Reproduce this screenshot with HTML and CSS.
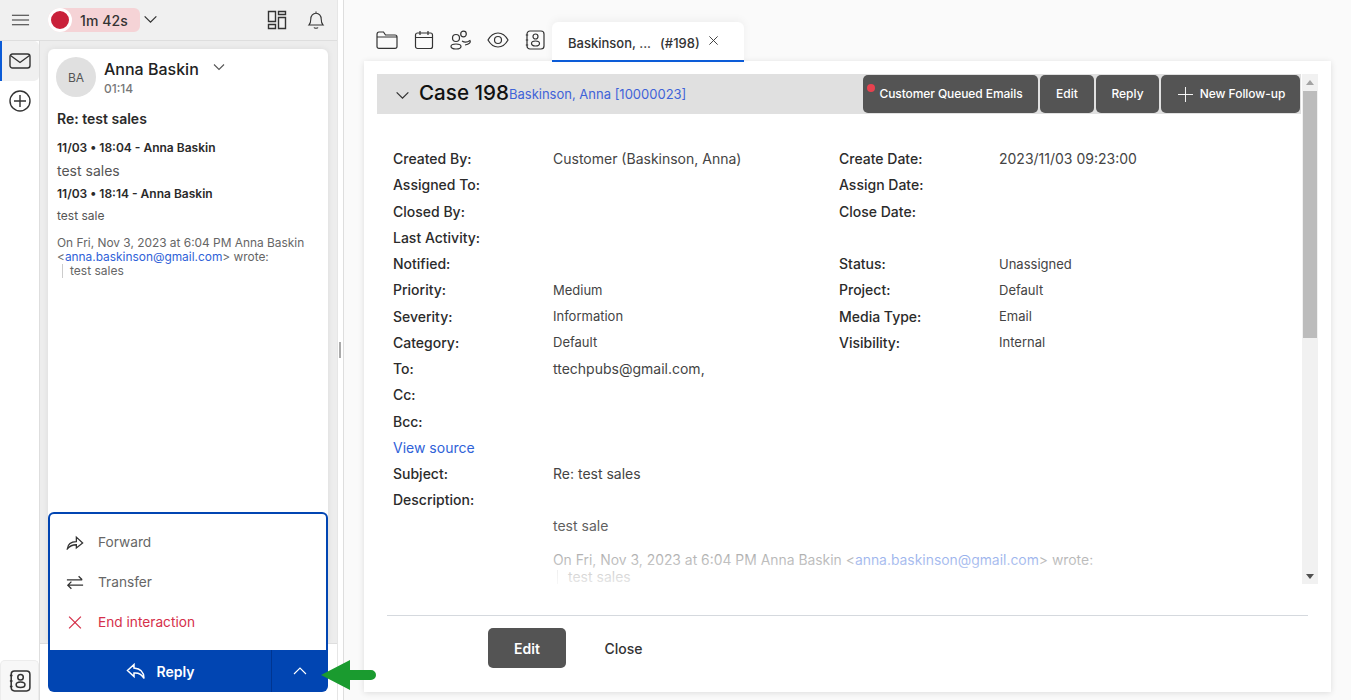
FILE: index.html

```html
<!DOCTYPE html>
<html lang="en">
<head>
  <meta charset="UTF-8">
  <meta name="viewport" content="width=device-width, initial-scale=1.0">
  <title>Case 198</title>
  <link rel="stylesheet" href="styles.css">
</head>
<body>
  <div class="app">
    <aside class="left">
      <div class="topbar">
        <svg class="ico menu-ico" viewBox="0 0 20 14"><path d="M1 2h18M1 7h18M1 12h18"/></svg>
        <div class="timer"><span class="rec"></span><span>1m 42s</span></div>
        <svg class="ico timer-caret" viewBox="0 0 16 10"><path d="M1.500 1.500 8 8l6.500-6.500"/></svg>
        <svg class="ico layout-ico" viewBox="0 0 20 20"><path d="M1.500 1.500h7v10h-7zM11.500 1.500h7v3h-7zM11.500 7.500h7v11h-7zM1.500 14.500h7v4h-7z"/></svg>
        <svg class="ico bell-ico" viewBox="0 0 20 20"><path d="M3 15c1.500-1.500 1.800-3 1.800-6 0-3.200 2.200-5.800 5.200-5.800s5.200 2.600 5.200 5.800c0 3 .3 4.500 1.800 6zM8 17.500c.5 1 3.500 1 4 0M10 3V1.500"/></svg>
      </div>
      <div class="left-body">
        <nav class="rail">
          <div class="rail-item active">
            <svg class="ico" viewBox="0 0 22 16"><rect x="1" y="1" width="20" height="14" rx="2.500"/><path d="m1.500 2.500 9.500 7 9.500-7"/></svg>
          </div>
          <div class="rail-item">
            <svg class="ico" viewBox="0 0 22 22"><circle cx="11" cy="11" r="10"/><path d="M11 5v12M5 11h12"/></svg>
          </div>
          <div class="rail-item contacts">
            <svg class="ico" viewBox="0 0 20 20"><rect x="2" y="1" width="17" height="18" rx="3"/><circle cx="10.500" cy="6.500" r="2.500"/><ellipse cx="10.500" cy="13.500" rx="4" ry="2.500"/><path d="M.8 5h2.400M.8 10h2.400M.8 15h2.400"/></svg>
          </div>
        </nav>
        <div class="inbox">
          <div class="inbox-fill">
            <div class="msg-card">
              <div class="msg-head">
                <div class="avatar">BA</div>
                <div class="who">
                  <div class="who-name">Anna Baskin <svg class="ico who-caret" viewBox="0 0 12 8"><path d="M1 1.500 6 6.500l5-5"/></svg></div>
                  <div class="who-time">01:14</div>
                </div>
              </div>
              <div class="msg-subject">Re: test sales</div>
              <div class="msg-meta first">11/03 • 18:04 - Anna Baskin</div>
              <div class="msg-text">test sales</div>
              <div class="msg-meta second">11/03 • 18:14 - Anna Baskin</div>
              <div class="msg-small">test sale</div>
              <div class="msg-quote">On Fri, Nov 3, 2023 at 6:04 PM Anna Baskin<br>&lt;<a href="#">anna.baskinson@gmail.com</a>&gt; wrote:</div>
              <div class="msg-quoted">test sales</div>
            </div>
          </div>
          <div class="inbox-foot"></div>
          <div class="reply-box">
            <div class="reply-menu">
              <div class="reply-opt">
                <svg class="ico" viewBox="0 0 20 16"><path d="M1.500 15c.5-5 4-8 10-8V2l7 6.500-7 5.500v-3.500c-4 0-7 .8-10 4.500z"/></svg>
                <span>Forward</span>
              </div>
              <div class="reply-opt">
                <svg class="ico" viewBox="0 0 20 16"><path d="M1 5h17M14 1l4 4M19 11H2M6 7l-4 4 4 4"/></svg>
                <span>Transfer</span>
              </div>
              <div class="reply-opt end">
                <svg class="ico" viewBox="0 0 14 14"><path d="m1.500 1.500 11 11M12.500 1.500l-11 11"/></svg>
                <span>End interaction</span>
              </div>
            </div>
            <div class="reply-bar">
              <div class="reply-main">
                <svg class="ico" viewBox="0 0 20 16"><path d="M8 1 1.500 7 8 13V9.500c4-.3 7.500.5 10 5.500 0-6-3.500-10-10-10.500z"/></svg>
                <span>Reply</span>
              </div>
              <div class="reply-more">
                <svg class="ico" viewBox="0 0 14 8"><path d="M1 7 7 1l6 6"/></svg>
              </div>
            </div>
          </div>
        </div>
      </div>
    </aside>

    <div class="splitter"><span class="grip"></span></div>

    <main class="right">
      <div class="tabs">
        <svg class="ico tab-ico" viewBox="0 0 22 18"><path d="M1 3.500C1 2 1.800 1 3 1h4.500l2 3H19c1.200 0 2 .8 2 2v9.500c0 1-.8 1.800-2 1.800H3c-1.200 0-2-.8-2-1.800zM1 6h20"/></svg>
        <svg class="ico tab-ico" viewBox="0 0 20 20"><rect x="1.500" y="3" width="17" height="15.500" rx="2"/><path d="M1.500 7.500h17M6 1v4M14 1v4"/></svg>
        <svg class="ico tab-ico" viewBox="0 0 22 20"><circle cx="13.500" cy="4" r="2.800"/><circle cx="6" cy="8" r="3.500"/><ellipse cx="6" cy="16.500" rx="5" ry="2.500"/><path d="M12 11c3 2 6 1 8-.5 1 1.500-.5 4-5 4.500"/></svg>
        <svg class="ico tab-ico" viewBox="0 0 22 16"><path d="M1 8c2.500-4.500 6-7 10-7s7.500 2.500 10 7c-2.500 4.500-6 7-10 7S3.500 12.500 1 8z"/><circle cx="11" cy="8" r="3.500"/></svg>
        <svg class="ico tab-ico last" viewBox="0 0 20 20"><rect x="2" y="1" width="17" height="18" rx="3"/><circle cx="10.500" cy="6.500" r="2.500"/><ellipse cx="10.500" cy="13.500" rx="4" ry="2.500"/><path d="M.8 5h2.400M.8 10h2.400M.8 15h2.400"/></svg>
        <div class="tab">
          <span class="tab-title">Baskinson, ...</span>
          <span class="tab-id">(#198)</span>
          <svg class="ico tab-x" viewBox="0 0 12 12"><path d="m1.500 1.500 9 9M10.500 1.500l-9 9"/></svg>
        </div>
      </div>
      <section class="case-card">
        <div class="case-view">
          <div class="case-main">
            <header class="case-head">
              <svg class="ico head-caret" viewBox="0 0 16 10"><path d="M1.500 1.500 8 8l6.500-6.500"/></svg>
              <h1 class="case-title">Case 198</h1>
              <a class="case-link" href="#">Baskinson, Anna [10000023]</a>
              <div class="head-btns">
                <button class="btn queued">Customer Queued Emails<span class="dot"></span></button>
                <button class="btn edit">Edit</button>
                <button class="btn reply">Reply</button>
                <button class="btn follow">
                  <svg class="ico" viewBox="0 0 16 16"><path d="M8 0v16M0 8h16"/></svg>New Follow-up
                </button>
              </div>
            </header>
            <div class="fields">
              <div class="lbl">Created By:</div><div class="val big">Customer (Baskinson, Anna)</div><div class="lbl">Create Date:</div><div class="val big">2023/11/03 09:23:00</div>
              <div class="lbl">Assigned To:</div><div class="val"></div><div class="lbl">Assign Date:</div><div class="val"></div>
              <div class="lbl">Closed By:</div><div class="val"></div><div class="lbl">Close Date:</div><div class="val"></div>
              <div class="lbl">Last Activity:</div><div class="val"></div><div class="lbl"></div><div class="val"></div>
              <div class="lbl">Notified:</div><div class="val"></div><div class="lbl">Status:</div><div class="val">Unassigned</div>
              <div class="lbl">Priority:</div><div class="val">Medium</div><div class="lbl">Project:</div><div class="val">Default</div>
              <div class="lbl">Severity:</div><div class="val">Information</div><div class="lbl">Media Type:</div><div class="val">Email</div>
              <div class="lbl">Category:</div><div class="val">Default</div><div class="lbl">Visibility:</div><div class="val">Internal</div>
              <div class="lbl">To:</div><div class="val big">ttechpubs@gmail.com,</div><div class="lbl"></div><div class="val"></div>
              <div class="lbl">Cc:</div><div class="val"></div><div class="lbl"></div><div class="val"></div>
              <div class="lbl">Bcc:</div><div class="val"></div><div class="lbl"></div><div class="val"></div>
              <div class="source"><a href="#">View source</a></div>
              <div class="lbl">Subject:</div><div class="val big">Re: test sales</div><div class="lbl"></div><div class="val"></div>
              <div class="lbl">Description:</div><div class="val"></div><div class="lbl"></div><div class="val"></div>
            </div>
            <div class="desc">
              <div class="desc-line">test sale</div>
              <div class="desc-quote">On Fri, Nov 3, 2023 at 6:04 PM Anna Baskin &lt;<a href="#">anna.baskinson@gmail.com</a>&gt; wrote:</div>
              <div class="desc-quoted">test sales</div>
            </div>
          </div>
          <div class="scrollbar">
            <span class="sb-up"></span>
            <span class="sb-thumb"></span>
            <span class="sb-down"></span>
          </div>
        </div>
        <footer class="case-foot">
          <button class="foot-edit">Edit</button>
          <button class="foot-close">Close</button>
        </footer>
      </section>
    </main>
  </div>

  <svg class="arrow" viewBox="0 0 56 30"><path d="M1 15 30 0v10h21a5 5 0 0 1 0 10H30v10z"/></svg>
</body>
</html>
```

FILE: styles.css

```css
* {
  box-sizing: border-box;
}

html, body {
  margin: 0;
  height: 700px;
  overflow: hidden;
}

body {
  font-family: Inter, "Liberation Sans", sans-serif;
  color: #2b2b2b;
  background: #fafafa;
  position: relative;
}

a {
  color: #2f62d8;
  text-decoration: none;
}

.ico {
  fill: none;
  stroke: #333;
  stroke-width: 1.4;
  display: block;
  flex: none;
}

.app {
  display: flex;
  height: 700px;
}

/* left panel */
.left {
  width: 337px;
  flex: none;
  display: flex;
  flex-direction: column;
  background: #fff;
}

.topbar {
  height: 41px;
  flex: none;
  background: #f0f0f0;
  border-bottom: 1px solid #dedede;
  display: flex;
  align-items: center;
  padding-left: 11px;
}

.menu-ico {
  width: 19px;
  height: 14px;
  stroke-width: 1.1;
}

.timer {
  margin-left: 18px;
  height: 24px;
  width: 92px;
  background: #f5d3d6;
  border-radius: 12px 6px 6px 12px;
  display: flex;
  align-items: center;
  font-size: 14px;
  font-weight: 500;
  letter-spacing: .1px;
  color: #333;
}

.rec {
  width: 24px;
  height: 24px;
  margin-right: 8px;
  border-radius: 50%;
  background: #c9213a;
  border: 3px solid #fff;
}

.timer-caret {
  width: 15px;
  height: 9px;
  margin-left: 3px;
  margin-top: -1px;
}

.layout-ico {
  width: 20px;
  height: 20px;
  margin-left: 109px;
  margin-top: -1px;
}

.bell-ico {
  width: 20px;
  height: 20px;
  margin-left: 19px;
  margin-top: -1px;
  stroke-width: 1.1;
}

.left-body {
  flex: 1;
  display: flex;
  min-height: 0;
}

.rail {
  width: 40px;
  flex: none;
  background: #fff;
  border-right: 1px solid #dedede;
  display: flex;
  flex-direction: column;
}

.rail-item {
  width: 39px;
  height: 40px;
  display: flex;
  align-items: center;
  justify-content: center;
}

.rail-item .ico {
  width: 22px;
  height: 22px;
}

.rail-item.active {
  background: #f0f0f0;
  border-left: 2px solid #0b5bd7;
  border-radius: 0 5px 5px 0;
  padding-right: 2px;
}

.rail-item.contacts {
  margin-top: auto;
  background: #f7f7f7;
  border-radius: 5px 5px 0 0;
  border: 1px solid #ececec;
  border-bottom: 0;
}

.inbox {
  flex: 1;
  display: flex;
  flex-direction: column;
  position: relative;
  min-width: 0;
}

.inbox-fill {
  flex: 1;
  background: #ededed;
  padding: 8px 9px 0 8px;
  display: flex;
  min-height: 0;
}

.inbox-foot {
  height: 57px;
  flex: none;
  background: #fff;
  border-top: 1px solid #dedede;
}

.msg-card {
  flex: 1;
  background: #fff;
  border-radius: 6px 6px 0 0;
  box-shadow: 0 0 6px rgba(0, 0, 0, .08);
  padding: 8px 8px 0 9px;
}

.msg-head {
  display: flex;
}

.avatar {
  width: 40px;
  height: 40px;
  border-radius: 50%;
  background: #e0e0e0;
  color: #555;
  font-size: 12px;
  display: flex;
  align-items: center;
  justify-content: center;
  flex: none;
  margin-left: -1px;
}

.who {
  margin-left: 8px;
}

.who-name {
  display: flex;
  align-items: center;
  font-size: 16px;
  font-weight: 500;
  line-height: 24px;
  height: 24px;
  color: #222;
}

.who-caret {
  width: 12px;
  height: 8px;
  margin: -4px 0 0 14px;
  stroke: #555;
  stroke-width: 1.1;
}

.who-time {
  font-size: 12px;
  font-weight: 500;
  color: #777;
  line-height: 16px;
}

.msg-subject {
  margin-top: 13px;
  font-size: 14px;
  font-weight: 600;
  line-height: 18px;
  color: #2a2a2a;
}

.msg-meta {
  font-size: 12px;
  font-weight: 600;
  line-height: 16px;
  color: #2a2a2a;
}

.msg-meta.first {
  margin-top: 12px;
}

.msg-text {
  font-size: 14px;
  line-height: 18px;
  margin-top: 6px;
  color: #555;
}

.msg-meta.second {
  margin-top: 6px;
}

.msg-small {
  font-size: 12px;
  line-height: 16px;
  margin-top: 6px;
  color: #555;
}

.msg-quote {
  margin-top: 12px;
  font-size: 11.900px;
  line-height: 14px;
  color: #666;
}

.msg-quoted {
  margin: 0 0 0 5px;
  padding-left: 7px;
  border-left: 1px solid #ccc;
  font-size: 12px;
  line-height: 14px;
  color: #666;
}

.reply-box {
  position: absolute;
  left: 8px;
  right: 9px;
  bottom: 8px;
  height: 180px;
  display: flex;
  flex-direction: column;
  border-radius: 6px;
  overflow: hidden;
  background: #0145b2;
  padding: 2px 2px 0;
}

.reply-menu {
  flex: 1;
  background: #fff;
  border-radius: 4px 4px 0 0;
  padding-top: 8px;
}

.reply-opt {
  height: 40px;
  display: flex;
  align-items: center;
  padding-left: 16px;
  font-size: 13.700px;
  color: #666;
}

.reply-opt .ico {
  width: 18px;
  height: 15px;
  margin-right: 14px;
  stroke-width: 1.4;
}

.reply-opt.end {
  color: #d5304a;
}

.reply-opt.end .ico {
  stroke: #d5304a;
  stroke-width: 1.2;
}

.reply-bar {
  height: 42px;
  flex: none;
  margin: 0 -2px;
  display: flex;
  color: #fff;
}

.reply-main {
  flex: 1;
  display: flex;
  align-items: center;
  justify-content: center;
  gap: 11px;
  padding-left: 1px;
  font-size: 14px;
  font-weight: 600;
  border-right: 1px solid #003591;
}

.reply-main .ico {
  width: 20px;
  height: 17px;
  stroke: #fff;
  stroke-width: 1.5;
}

.reply-more {
  width: 56px;
  display: flex;
  align-items: center;
  justify-content: center;
}

.reply-more .ico {
  width: 14px;
  height: 8px;
  stroke: #fff;
  stroke-width: 1.1;
}

.splitter {
  width: 7px;
  flex: none;
  background: #fff;
  border-right: 1px solid #dedede;
  border-left: 1px solid #e6e6e6;
  display: flex;
  align-items: center;
  padding-left: 1px;
}

.grip {
  width: 2px;
  height: 16px;
  background: #aaa;
}

/* right panel */
.right {
  flex: 1;
  min-width: 0;
  padding: 22px 20px 8px;
  display: flex;
  flex-direction: column;
}

.tabs {
  height: 40px;
  flex: none;
  display: flex;
  align-items: center;
  padding-left: 12px;
  position: relative;
  z-index: 1;
}

.tab-ico {
  width: 22px;
  height: 20px;
  margin-right: 15px;
  margin-top: -4px;
  stroke-width: 1.2;
}

.tab-ico.last {
  margin-right: 6px;
}

.tab {
  width: 192px;
  height: 40px;
  background: #fff;
  border-radius: 6px 6px 0 0;
  border-bottom: 2px solid #0b5bd7;
  box-shadow: 0 -2px 8px rgba(0, 0, 0, .05);
  display: flex;
  align-items: center;
  padding: 3px 0 0 16px;
  font-size: 13px;
  font-weight: 500;
  color: #333;
}

.tab-id {
  margin-left: 9px;
}

.tab-x {
  width: 11px;
  height: 11px;
  margin: -5px 0 0 8px;
  stroke-width: 1;
}

.case-card {
  flex: 1;
  min-height: 0;
  margin-top: -1px;
  background: #fff;
  box-shadow: 0 1px 6px rgba(0, 0, 0, .12);
  display: flex;
  flex-direction: column;
  padding: 13px 13px 0;
}

.case-view {
  height: 510px;
  flex: none;
  display: flex;
  overflow: hidden;
}

.case-main {
  flex: 1;
  min-width: 0;
  position: relative;
}

.case-main::after {
  content: "";
  position: absolute;
  left: 0;
  right: 0;
  bottom: 0;
  height: 70px;
  background: linear-gradient(rgba(255, 255, 255, 0), rgba(255, 255, 255, .85));
}

.case-head {
  height: 40px;
  background: #e0e0e0;
  display: flex;
  align-items: center;
  padding-left: 18px;
}

.head-caret {
  width: 15px;
  height: 9px;
  margin-top: 3px;
}

.case-title {
  margin: -3px 0 0 9px;
  font-size: 20.600px;
  font-weight: 500;
  color: #111;
}

.case-link {
  font-size: 13px;
  color: #3f63d8;
  margin-top: -1px;
}

.head-btns {
  margin-left: auto;
  margin-right: 1px;
  display: flex;
  gap: 2px;
}

.btn {
  height: 38px;
  border: 0;
  border-radius: 5px;
  background: #545454;
  color: #fff;
  font-family: inherit;
  font-size: 12px;
  font-weight: 500;
  display: flex;
  align-items: center;
  justify-content: center;
  padding: 0 0 2px;
  position: relative;
}

.btn.queued { width: 175px; padding-left: 1px; letter-spacing: -.08px; }
.btn.edit { width: 54px; }
.btn.reply { width: 63px; }
.btn.follow { width: 139px; gap: 7px; padding-left: 2px; letter-spacing: -.05px; }

.btn.follow .ico {
  width: 15px;
  height: 15px;
  margin-top: 2px;
  stroke: #fff;
  stroke-width: 1;
}

.dot {
  position: absolute;
  left: 4px;
  top: 9px;
  width: 8px;
  height: 8px;
  border-radius: 50%;
  background: #e8424f;
}

.fields {
  display: grid;
  grid-template-columns: 160px 286px 160px 1fr;
  grid-auto-rows: 26.250px;
  margin-top: 31.600px;
  padding-left: 16px;
  align-items: center;
  font-size: 13px;
}

.lbl {
  font-weight: 500;
  color: #2b2b2b;
  font-size: 14px;
}

.val {
  color: #444;
  font-size: 13px;
}

.val.big {
  font-size: 14px;
}

.source {
  grid-column: 1 / -1;
  font-size: 14px;
}

.desc {
  padding-left: 176px;
  margin-top: 3.400px;
}

.desc-line {
  font-size: 14px;
  line-height: 20px;
  color: #444;
}

.desc-quote {
  margin-top: 14px;
  font-size: 13.900px;
  line-height: 20px;
  color: #666;
}

.desc-quoted {
  margin-left: 4px;
  padding-left: 10px;
  border-left: 1px solid #ccc;
  font-size: 14px;
  line-height: 14px;
  color: #666;
}

.scrollbar {
  width: 16px;
  flex: none;
  background: #f1f1f1;
  display: flex;
  flex-direction: column;
  align-items: center;
  margin-left: 1px;
}

.sb-up, .sb-down {
  width: 0;
  height: 0;
  flex: none;
  border-left: 4px solid transparent;
  border-right: 4px solid transparent;
}

.sb-up {
  margin: 6px 0 6px;
  border-bottom: 5px solid #a3a3a3;
}

.sb-thumb {
  width: 14px;
  height: 247px;
  flex: none;
  background: #bcbcbc;
}

.sb-down {
  margin-top: auto;
  margin-bottom: 5px;
  border-top: 5px solid #505050;
}

.case-foot {
  flex: 1;
  margin: 0 10px;
  margin-top: 31px;
  border-top: 1px solid #d5d9de;
  display: flex;
  align-items: flex-start;
  padding: 12px 0 0 101px;
}

.foot-edit, .foot-close {
  height: 40px;
  border: 0;
  font-family: inherit;
  font-size: 14px;
  font-weight: 600;
  padding: 0;
}

.foot-edit {
  width: 78px;
  border-radius: 5px;
  background: #545454;
  color: #fff;
}

.foot-close {
  width: 39px;
  margin-left: 38px;
  background: none;
  color: #333;
  font-weight: 500;
}

/* annotation over the screenshot */
.arrow {
  position: absolute;
  left: 320px;
  top: 660px;
  width: 56px;
  height: 30px;
  fill: #1a9b2f;
}
```
